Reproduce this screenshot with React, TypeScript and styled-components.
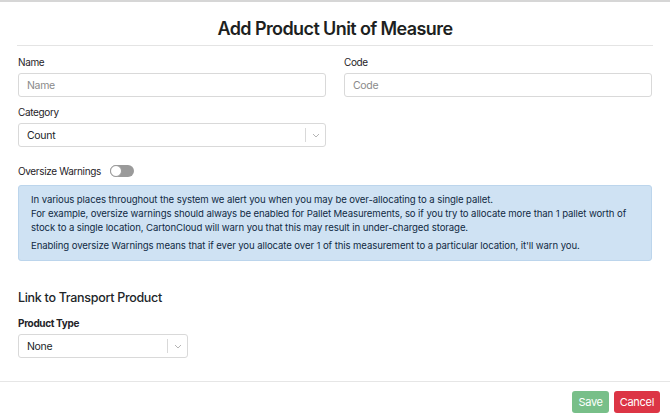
import React, { useState } from "react";
import styled, { createGlobalStyle } from "styled-components";

const GlobalStyle = createGlobalStyle`
  html, body {
    margin: 0;
    padding: 0;
    background: #fff;
  }
  body {
    font-family: Inter, "Noto Sans", "Liberation Sans", sans-serif;
    color: #212529;
  }
  * { box-sizing: border-box; }
`;

const Modal = styled.div`
  width: 670px;
  height: 420px;
  border-top: 2px solid #d6d6d6;
  display: flex;
  flex-direction: column;
  background: #fff;
`;

const Header = styled.div`
  margin: 0 17px;
  padding: 15px 0 4px;
  border-bottom: 1px solid #e4e4e4;
  text-align: center;
`;

const Title = styled.h1`
  margin: 0;
  font-size: 18px;
  line-height: 24px;
  font-weight: 600;
  letter-spacing: -0.6px;
  color: #1d1f21;
`;

const Body = styled.div`
  flex: 1;
  padding: 9px 18px 0;
`;

const Row = styled.div`
  display: grid;
  grid-template-columns: 1fr 1fr;
  column-gap: 18px;
`;

const Field = styled.div<{ width?: number }>`
  display: flex;
  flex-direction: column;
  gap: 4px;
  margin-bottom: 8px;
  width: ${({ width }) => (width ? `${width}px` : "auto")};
`;

const Label = styled.label<{ bold?: boolean }>`
  font-size: 10px;
  line-height: 14px;
  letter-spacing: -0.35px;
  font-weight: ${({ bold }) => (bold ? 700 : 400)};
  color: #1f2328;
`;

const Input = styled.input`
  height: 24px;
  border: 1px solid #d9d9d9;
  border-radius: 3px;
  padding: 0 8px;
  font-family: inherit;
  font-size: 10.5px;
  letter-spacing: -0.3px;
  color: #212529;
  outline: none;
  &::placeholder {
    color: #8a8a8a;
  }
`;

const Select = styled.div`
  height: 24px;
  border: 1px solid #d9d9d9;
  border-radius: 3px;
  display: flex;
  align-items: center;
  background: #fff;
`;

const SelectValue = styled.span`
  flex: 1;
  padding: 0 8px;
  font-size: 10.5px;
  letter-spacing: -0.3px;
  color: #212529;
`;

const Indicator = styled.span`
  width: 20px;
  height: 14px;
  border-left: 1px solid #d9d9d9;
  display: flex;
  align-items: center;
  justify-content: center;
  color: #b5b5b5;
`;

const ToggleRow = styled.div`
  display: flex;
  align-items: center;
  gap: 9px;
  margin: 9px 0 7px;
`;

const Track = styled.button<{ on: boolean }>`
  width: 24px;
  height: 12px;
  border-radius: 6px;
  border: none;
  padding: 0;
  background: ${({ on }) => (on ? "#28a745" : "#9a9a9a")};
  position: relative;
  cursor: pointer;
`;

const Knob = styled.span<{ on: boolean }>`
  position: absolute;
  top: 0;
  left: ${({ on }) => (on ? "12px" : "0")};
  width: 12px;
  height: 12px;
  border-radius: 50%;
  background: #fff;
  border: 1px solid #9a9a9a;
`;

const Alert = styled.div`
  background: #cfe2f3;
  border: 1px solid #bcd5ec;
  border-radius: 3px;
  padding: 7px 12px;
  color: #102a43;
  font-size: 9.6px;
  line-height: 14px;
  letter-spacing: -0.1px;
  p {
    margin: 0;
  }
  p + p {
    margin-top: 4px;
  }
`;

const SectionTitle = styled.h2`
  margin: 29px 0 10px;
  font-size: 12.5px;
  line-height: 16px;
  font-weight: 500;
  letter-spacing: -0.3px;
  color: #212529;
`;

const Footer = styled.div`
  border-top: 1px solid #e6e6e6;
  height: 39px;
  display: flex;
  align-items: center;
  justify-content: flex-end;
  gap: 5px;
  padding: 2px 10px 0;
`;

const Button = styled.button<{ variant: "save" | "cancel" }>`
  height: 22px;
  padding: 0 6px;
  border: none;
  border-radius: 3px;
  font-family: inherit;
  font-size: 11px;
  letter-spacing: -0.3px;
  color: #fff;
  background: ${({ variant }) => (variant === "save" ? "#78bf89" : "#dc3545")};
  cursor: pointer;
`;

const Chevron = () => (
  <svg width="8" height="5" viewBox="0 0 8 5" fill="none">
    <path d="M1 1l3 3 3-3" stroke="currentColor" strokeWidth="1" />
  </svg>
);

export default function App() {
  const [oversize, setOversize] = useState(false);
  return (
    <>
      <GlobalStyle />
      <Modal>
        <Header>
          <Title>Add Product Unit of Measure</Title>
        </Header>
        <Body>
          <Row>
            <Field>
              <Label>Name</Label>
              <Input placeholder="Name" />
            </Field>
            <Field>
              <Label>Code</Label>
              <Input placeholder="Code" />
            </Field>
          </Row>
          <Row>
            <Field>
              <Label>Category</Label>
              <Select>
                <SelectValue>Count</SelectValue>
                <Indicator>
                  <Chevron />
                </Indicator>
              </Select>
            </Field>
          </Row>
          <ToggleRow>
            <Label>Oversize Warnings</Label>
            <Track on={oversize} onClick={() => setOversize(!oversize)}>
              <Knob on={oversize} />
            </Track>
          </ToggleRow>
          <Alert>
            <p>
              In various places throughout the system we alert you when you may be over-allocating to a single pallet.
              <br />
              For example, oversize warnings should always be enabled for Pallet Measurements, so if you try to allocate
              more than 1 pallet worth of stock to a single location, CartonCloud will warn you that this may result in
              under-charged storage.
            </p>
            <p>
              Enabling oversize Warnings means that if ever you allocate over 1 of this measurement to a particular
              location, it'll warn you.
            </p>
          </Alert>
          <SectionTitle>Link to Transport Product</SectionTitle>
          <Field width={170}>
            <Label bold>Product Type</Label>
            <Select>
              <SelectValue>None</SelectValue>
              <Indicator>
                <Chevron />
              </Indicator>
            </Select>
          </Field>
        </Body>
        <Footer>
          <Button variant="save">Save</Button>
          <Button variant="cancel">Cancel</Button>
        </Footer>
      </Modal>
    </>
  );
}
